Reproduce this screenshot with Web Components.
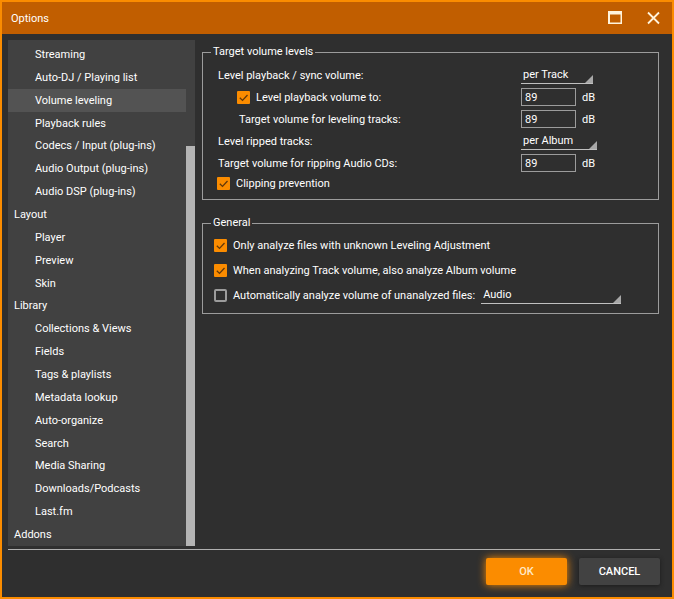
<!DOCTYPE html>
<html lang="en">
<head>
<meta charset="utf-8">
<title>Options</title>
<style>
html, body { height: 100%; margin: 0; }
body {
  --accent: #fb8c00;
  --bar: #c15e00;
  --surface: #2f2f2f;
  --panel: #414141;
  --line: #9c9c9c;
  --text: #ffffff;
  background: var(--surface);
  color: var(--text);
  font: 400 11px/17px Roboto, "Liberation Sans", sans-serif;
}
</style>
</head>
<body>
<options-dialog></options-dialog>
<script>
const define = (name, markup, setup) => {
  const template = document.createElement('template');
  template.innerHTML = '<style>:host,*{box-sizing:border-box}:host([hidden]){display:none}</style>' + markup;
  customElements.define(name, class extends HTMLElement {
    constructor() {
      super();
      this.attachShadow({ mode: 'open' }).append(template.content.cloneNode(true));
    }
    connectedCallback() { if (setup && !this.ready) { this.ready = true; setup(this, this.shadowRoot); } }
  });
};

define('title-bar', `
<style>
:host { display: flex; align-items: center; height: 32px; padding: 0 10px 0 9px; background: var(--bar); flex: none; }
h1 { flex: 1; margin: 0; font: inherit; }
div { display: flex; gap: 20px; }
button { display: block; width: 18px; height: 18px; padding: 0; border: 0; background: none; color: #fff3dc; }
svg { display: block; }
</style>
<h1><slot></slot></h1>
<div>
<button type="button" aria-label="Maximize"><svg width="18" height="18"><path d="M2 2h14v13H2z M4 5.5v8h10.5v-8z" fill="currentColor" fill-rule="evenodd"/></svg></button>
<button type="button" aria-label="Close"><svg width="18" height="18"><path d="M4 3.5l11 11M15 3.5l-11 11" stroke="currentColor" stroke-width="1.8" fill="none"/></svg></button>
</div>`);

define('nav-item', `
<style>
:host { display: flex; flex: 1; min-height: 16px; }
a { flex: 1; display: flex; align-items: center; padding-left: 27px; color: inherit; text-decoration: none; }
:host([root]) a { padding-left: 6px; }
:host([current]) a { background: #535353; }
</style>
<a href="#"><slot></slot></a>`, (host, root) => {
  if (host.hasAttribute('current')) root.querySelector('a').setAttribute('aria-current', 'page');
});

define('nav-list', `
<style>
:host { display: flex; width: 187px; flex: none; background: var(--panel); }
nav { flex: 1; display: flex; flex-direction: column; padding-top: 3px; }
.track { width: 9px; display: flex; flex-direction: column; justify-content: flex-end; }
.thumb { height: 79%; background: #b4b4b4; }
</style>
<nav aria-label="Option pages"><slot></slot></nav>
<div class="track"><div class="thumb"></div></div>`);

define('option-group', `
<style>
:host { display: block; }
fieldset { margin: 0; min-width: 0; border: 1px solid var(--line); padding: 4px 14px 7px; }
:host([compact]) fieldset { padding: 2px 11px 6px; }
legend { margin-left: -6px; padding: 0 2px; line-height: 16px; }
:host([compact]) legend { margin-left: -3px; }
</style>
<fieldset><legend></legend><slot></slot></fieldset>`, (host, root) => {
  root.querySelector('legend').textContent = host.getAttribute('heading');
});

define('check-option', `
<style>
:host { display: inline-flex; align-items: center; }
label { display: flex; align-items: center; gap: 6px; white-space: nowrap; }
.box { display: grid; width: 13px; height: 13px; }
.box > * { grid-area: 1 / 1; }
input { appearance: none; margin: 0; width: 13px; height: 13px; border: 2px solid var(--line); border-radius: 2px; }
input:checked { border: 0; background: var(--accent); border-radius: 1px; }
svg { display: block; visibility: hidden; pointer-events: none; }
input:checked + svg { visibility: visible; }
</style>
<label><span class="box"><input type="checkbox"><svg width="13" height="13"><path d="M2.8 6.8l2.7 2.6 5-5.4" fill="none" stroke="#62380a" stroke-width="1.3"/></svg></span><slot></slot></label>`,
(host, root) => { root.querySelector('input').checked = host.hasAttribute('checked'); });

define('drop-down', `
<style>
:host { display: inline-block; }
.wrap { display: grid; align-items: end; justify-items: end; height: 18px; border-bottom: 1px solid #c0c0c0; }
.wrap > * { grid-area: 1 / 1; }
select { appearance: none; width: 100%; height: 17px; margin: 0; padding: 0 12px 0 2px; border: 0; outline: 0; background: none; color: inherit; font: inherit; }
svg { display: block; pointer-events: none; }
</style>
<div class="wrap"><select></select><svg width="8" height="8"><path d="M8 0v8H0z" fill="#a8a8a8"/></svg></div>`,
(host, root) => {
  const select = root.querySelector('select');
  select.setAttribute('aria-label', host.getAttribute('label'));
  select.add(new Option(host.getAttribute('value')));
});

define('level-input', `
<style>
:host { display: flex; }
label { display: flex; align-items: center; gap: 6px; }
input { width: 55px; height: 18px; margin: 0; padding: 0 3px; border: 1px solid var(--line); background: none; color: inherit; font: inherit; outline: 0; }
</style>
<label><input type="text" value="89"><span>dB</span></label>`, (host, root) => {
  root.querySelector('input').setAttribute('aria-label', host.getAttribute('label') + ' dB');
});

define('option-row', `
<style>
:host { display: grid; grid-template-columns: 304px 1fr; align-items: center; height: 22px; }
.name { padding-left: 1px; }
:host([indent]) .name { padding-left: 22px; }
:host([indent=check]) .name { padding-left: 20px; }
.name, .control { display: flex; align-items: center; }
</style>
<div class="name"><slot></slot></div>
<div class="control"><slot name="control"></slot></div>`);

define('push-button', `
<style>
:host { display: block; width: 81px; }
button { display: block; width: 100%; height: 27px; padding: 0; border: 0; border-radius: 2px; background: #424242; color: inherit; font: inherit; font-weight: 500; box-shadow: 0 1px 4px #1c1c1c; }
:host([primary]) button { background: var(--accent); color: #ffe9c8; box-shadow: 0 0 8px var(--accent); }
</style>
<button type="button"><slot></slot></button>`);

define('options-dialog', `
<style>
:host { display: flex; flex-direction: column; min-height: 100vh; border: 2px solid var(--accent); background: var(--surface); }
.content { flex: 1; display: flex; gap: 7px; margin: 6px 13px 0 6px; }
main { flex: 1; min-width: 0; padding-top: 4px; display: flex; flex-direction: column; gap: 15px; }
.wide { width: 72px; } .wider { width: 76px; } .widest { width: 140px; }
.checks { display: grid; grid-auto-rows: 24px; gap: 1px; }
.line { display: flex; align-items: center; gap: 6px; }
.clip { display: flex; height: 18px; }
footer { display: flex; justify-content: flex-end; gap: 12px; margin: 3px 12px 12px 6px; padding-top: 8px; border-top: 1px solid #b0b0b0; }
</style>
<title-bar>Options</title-bar>
<div class="content">
<nav-list>
<nav-item>Streaming</nav-item>
<nav-item>Auto-DJ / Playing list</nav-item>
<nav-item current>Volume leveling</nav-item>
<nav-item>Playback rules</nav-item>
<nav-item>Codecs / Input (plug-ins)</nav-item>
<nav-item>Audio Output (plug-ins)</nav-item>
<nav-item>Audio DSP (plug-ins)</nav-item>
<nav-item root>Layout</nav-item>
<nav-item>Player</nav-item>
<nav-item>Preview</nav-item>
<nav-item>Skin</nav-item>
<nav-item root>Library</nav-item>
<nav-item>Collections &amp; Views</nav-item>
<nav-item>Fields</nav-item>
<nav-item>Tags &amp; playlists</nav-item>
<nav-item>Metadata lookup</nav-item>
<nav-item>Auto-organize</nav-item>
<nav-item>Search</nav-item>
<nav-item>Media Sharing</nav-item>
<nav-item>Downloads/Podcasts</nav-item>
<nav-item>Last.fm</nav-item>
<nav-item root>Addons</nav-item>
</nav-list>
<main>
<option-group heading="Target volume levels">
<option-row>Level playback / sync volume:<drop-down slot="control" class="wide" label="Level playback / sync volume" value="per Track"></drop-down></option-row>
<option-row indent="check"><check-option checked>Level playback volume to:</check-option><level-input slot="control" label="Level playback volume to"></level-input></option-row>
<option-row indent>Target volume for leveling tracks:<level-input slot="control" label="Target volume for leveling tracks"></level-input></option-row>
<option-row>Level ripped tracks:<drop-down slot="control" class="wider" label="Level ripped tracks" value="per Album"></drop-down></option-row>
<option-row>Target volume for ripping Audio CDs:<level-input slot="control" label="Target volume for ripping Audio CDs"></level-input></option-row>
<div class="clip"><check-option checked>Clipping prevention</check-option></div>
</option-group>
<option-group heading="General" compact>
<div class="checks">
<check-option checked>Only analyze files with unknown Leveling Adjustment</check-option>
<check-option checked>When analyzing Track volume, also analyze Album volume</check-option>
<div class="line"><check-option>Automatically analyze volume of unanalyzed files:</check-option><drop-down class="widest" label="Unanalyzed file type" value="Audio"></drop-down></div>
</div>
</option-group>
</main>
</div>
<footer><push-button primary>OK</push-button><push-button>CANCEL</push-button></footer>`);
</script>
</body>
</html>
